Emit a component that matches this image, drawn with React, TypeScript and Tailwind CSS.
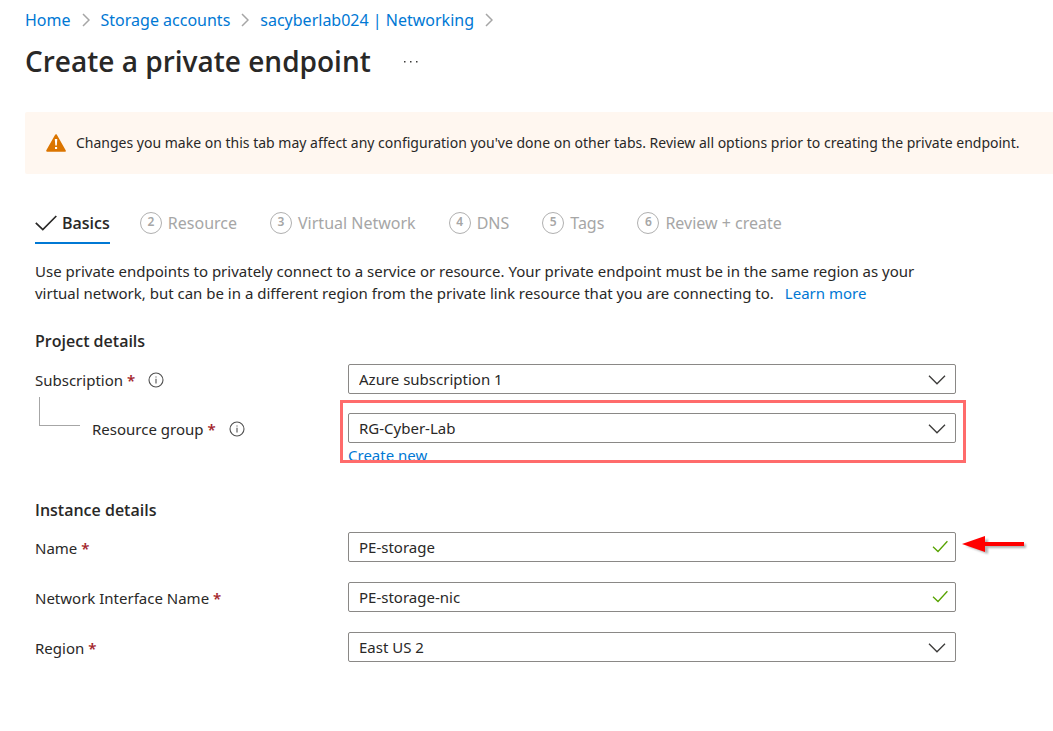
import React from "react";

const crumbs = ["Home", "Storage accounts", "sacyberlab024 | Networking"];
const steps = ["Resource", "Virtual Network", "DNS", "Tags", "Review + create"];

function CrumbChevron() {
  return (
    <svg width="8" height="14" viewBox="0 0 8 14" fill="none" stroke="#a6a6a6" strokeWidth="1.5" aria-hidden="true">
      <path d="M1 1l6 6-6 6" />
    </svg>
  );
}

function InfoIcon() {
  return (
    <svg width="16" height="16" viewBox="0 0 16 16" fill="none" stroke="#505050" role="img" aria-label="Info">
      <circle cx="8" cy="8" r="7" strokeWidth="1.1" />
      <path d="M8 6.8v4.7M8 4.4v1.2" strokeWidth="1.1" />
    </svg>
  );
}

function Label({ htmlFor, children, info }: { htmlFor: string; children: string; info?: boolean }) {
  return (
    <span className="flex h-8 items-center gap-[13px]">
      <label htmlFor={htmlFor}>
        {children} <span className="font-semibold text-[#a4262c]">*</span>
      </label>
      {info && <InfoIcon />}
    </span>
  );
}

const control =
  "block h-[30px] w-full appearance-none rounded-[2px] border border-[#8a8886] bg-white pr-10 pl-[10px] text-[15px] text-[#292827] outline-none";

function SelectBox({ id, value }: { id: string; value: string }) {
  return (
    <div className="relative">
      <select id={id} className={control} defaultValue={value}>
        <option>{value}</option>
      </select>
      <svg className="pointer-events-none absolute top-[11px] right-[10px]" width="18" height="10" viewBox="0 0 18 10" fill="none" stroke="#3b3a39" strokeWidth="1.3" aria-hidden="true">
        <path d="M1 .8l8 8 8-8" />
      </svg>
    </div>
  );
}

function TextBox({ id, value }: { id: string; value: string }) {
  return (
    <div className="relative">
      <input id={id} type="text" className={control} defaultValue={value} />
      <svg className="pointer-events-none absolute top-2 right-2" width="16" height="13" viewBox="0 0 16 13" fill="none" stroke="#57a300" strokeWidth="1.3" aria-hidden="true">
        <path d="M1 6.8l5 4.7L15.4 1.2" />
      </svg>
    </div>
  );
}

const row = "grid grid-cols-[313px_1fr] items-start";

export default function App() {
  return (
    <div className="min-h-screen bg-white pb-8 pl-[25px] font-['Noto_Sans','Open_Sans',sans-serif] text-[15px] text-[#292827]">
      <nav aria-label="Breadcrumb" className="flex h-10 items-center gap-[11px] text-base text-[#0078d4]">
        {crumbs.map((c) => (
          <React.Fragment key={c}>
            <a href="#">{c}</a>
            <CrumbChevron />
          </React.Fragment>
        ))}
      </nav>

      <header className="flex h-[42px] items-center gap-8">
        <h1 className="font-['Open_Sans',sans-serif] text-[28px] leading-[42px] font-semibold">Create a private endpoint</h1>
        <button type="button" aria-label="More actions">
          <svg width="15" height="3" viewBox="0 0 15 3" fill="#3b3a39" aria-hidden="true">
            <rect x="1" y="1" width="1.5" height="1.5" />
            <rect x="7" y="1" width="1.5" height="1.5" />
            <rect x="13" y="1" width="1.5" height="1.5" />
          </svg>
        </button>
      </header>

      <div role="alert" className="mt-[30px] flex min-h-[62px] items-center gap-[10px] rounded-l-[2px] bg-[#fff7f0] pl-[21px] text-sm">
        <svg width="20" height="18" viewBox="0 0 20 18" aria-hidden="true">
          <path d="M10 1.2L18.8 16.8H1.2z" fill="#db7500" stroke="#db7500" strokeWidth="2" strokeLinejoin="round" />
          <path d="M8.8 5h2.5l-.5 6.6H9.3zM9 13h2.1v2.1H9z" fill="#fff" />
        </svg>
        <p>
          Changes you make on this tab may affect any configuration you've done on other tabs. Review all options prior to creating the private endpoint.
        </p>
      </div>

      <main className="mr-[97px] pl-[10px]">
        <div role="tablist" className="mt-[30px] flex h-10 text-base text-[#a6a6a6]">
          <button type="button" role="tab" aria-selected="true" className="mr-[30px] flex items-center gap-[5px] border-b-2 border-[#0078d4] font-['Open_Sans',sans-serif] font-semibold text-[#292827]">
            <svg width="22" height="16" viewBox="0 0 22 16" fill="none" stroke="#292827" strokeWidth="1.7" aria-hidden="true">
              <path d="M.8 7.8l7 6.8L21.3 1" />
            </svg>
            Basics
          </button>
          <div className="flex gap-[33px] border-b-2 border-transparent">
            {steps.map((s, i) => (
              <button key={s} type="button" role="tab" aria-selected="false" className="flex items-center gap-[6px] whitespace-nowrap">
                <span className="flex size-[22px] items-center justify-center rounded-full border-[1.5px] border-[#b0b0b0] pb-[2px] text-xs leading-none font-semibold">{i + 2}</span>
                {s}
              </button>
            ))}
          </div>
        </div>

        <p className="mt-4 leading-[22px]">
          Use private endpoints to privately connect to a service or resource. Your private endpoint must be in the same region as your virtual network, but can be in a different region from the private link resource that you are connecting to.
          <a href="#" className="ml-[11px] text-[#0078d4]">Learn more</a>
        </p>

        <section>
          <h2 className="mt-[25px] font-['Open_Sans',sans-serif] text-base leading-6 font-semibold">Project details</h2>
          <div className={`${row} mt-[11px]`}>
            <Label htmlFor="subscription" info>Subscription</Label>
            <SelectBox id="subscription" value="Azure subscription 1" />
          </div>
          <div className={`${row} mt-[17px]`}>
            <div className="flex items-start gap-3">
              <span className="-mt-4 ml-1 h-[29px] w-[41px] border-b border-l border-[#a6a6a6]" />
              <Label htmlFor="group" info>Resource group</Label>
            </div>
            <div className="relative">
              <SelectBox id="group" value="RG-Cyber-Lab" />
              <a href="#" className="mt-[2px] block leading-[20px] text-[#0078d4]">Create new</a>
              <span className="pointer-events-none absolute -top-[13px] -right-[10px] -left-2 h-[63px] border-3 border-[#ff6b6b]" />
            </div>
          </div>
        </section>

        <section>
          <h2 className="mt-[33px] font-['Open_Sans',sans-serif] text-base leading-6 font-semibold">Instance details</h2>
          <div className="mt-[10px] flex flex-col gap-[18px]">
            <div className={row}>
              <Label htmlFor="name">Name</Label>
              <div className="relative">
                <TextBox id="name" value="PE-storage" />
                <svg className="absolute top-1 left-full ml-[6px]" width="68" height="22" viewBox="0 0 68 22" aria-hidden="true">
                  <path d="M4 10L26 3v5h38v4H26v6z" fill="#808080" className="opacity-60 blur-[1px]" />
                  <path d="M0 8L23 0v6h39v4H23v6z" fill="#ff0000" />
                </svg>
              </div>
            </div>
            <div className={row}>
              <Label htmlFor="nic">Network Interface Name</Label>
              <TextBox id="nic" value="PE-storage-nic" />
            </div>
            <div className={row}>
              <Label htmlFor="region">Region</Label>
              <SelectBox id="region" value="East US 2" />
            </div>
          </div>
        </section>
      </main>
    </div>
  );
}
